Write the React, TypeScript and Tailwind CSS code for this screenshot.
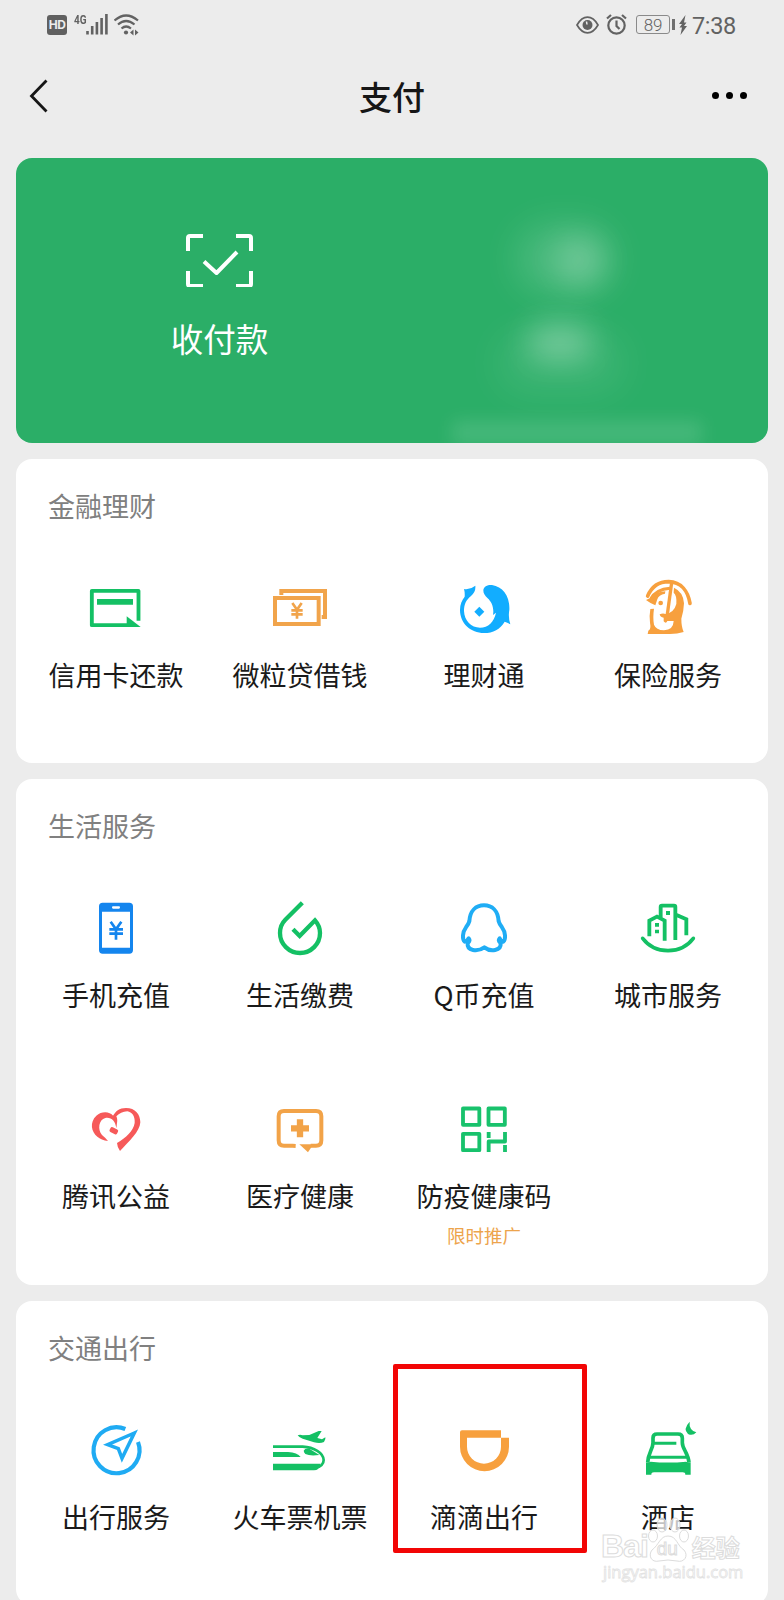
import type { ReactNode } from "react";

type Service = {
  name: string;
  icon: ReactNode;
  color: string;
  note?: string;
  highlighted?: boolean;
};

const GREEN = "text-[#14c064]";
const ORANGE = "text-[#f7a03e]";
const BLUE = "text-[#12adff]";

function Glyph({ children }: { children: ReactNode }) {
  return (
    <svg viewBox="0 0 180 180" className="h-[60px] w-[60px]" fill="none" stroke="currentColor">
      {children}
    </svg>
  );
}

const finance: Service[] = [
  {
    name: "信用卡还款",
    color: GREEN,
    icon: (
      <Glyph>
        <path d="M157.500 128L157.500 38.500H17.500V141.500H128" strokeWidth="11.500" strokeLinejoin="round" />
        <path d="M33 71.500H141" strokeWidth="17" />
        <path d="M122 115L164 147H122Z" fill="currentColor" stroke="none" />
      </Glyph>
    )
  },
  {
    name: "微粒贷借钱",
    color: "text-[#f1a44b]",
    icon: (
      <Glyph>
        <rect x="15" y="60" width="131" height="78" strokeWidth="12" />
        <path d="M34 51V39H165V117H155" strokeWidth="12" />
        <path d="M67 75L81 95L95 75M64 97H98M64 109H98M81 95V122" strokeWidth="8" />
      </Glyph>
    )
  },
  {
    name: "理财通",
    color: BLUE,
    icon: (
      <Glyph>
        <g fill="currentColor" stroke="none">
          <path d="M30 33Q48 36 64 23Q66 42 51 54C36 66 30 80 30 99C31 128 52 149 78 149C103 149 120 132 126 104L117 111C121 88 112 71 101 61C92 53 88 46 88 37C89 24 102 20 114 21C146 26 168 54 166 96Q162 116 169 139Q160 133 152 131C138 154 118 165 90 165C50 165 18 136 18 96C18 78 24 66 32 56Q33 44 30 33Z" />
          <path d="M76 86L91 101L76 116L61 101Z" />
        </g>
      </Glyph>
    )
  },
  {
    name: "保险服务",
    color: ORANGE,
    icon: (
      <Glyph>
        <path d="M29 54C42 24 64 11 92 11C130 12 150 40 156 76" strokeWidth="11" strokeLinecap="round" />
        <path d="M38 63Q54 34 96 31" strokeWidth="9" />
        <path d="M101 14L87 116" strokeWidth="10" />
        <g fill="currentColor" stroke="none">
          <path d="M24 66Q38 62 46 52Q58 42 82 40L81 47Q62 50 58 64L52 82Q40 78 24 66Z" />
          <circle cx="68" cy="75" r="7" />
          <path d="M108 29Q136 42 138 76Q137 102 130 122Q130 146 137 162Q118 168 96 168H29L31 158Q40 154 36 134Q33 116 37 93L48 92Q44 120 48 140Q54 156 78 157Q106 156 107 129H88Q84 139 77 130V119Q66 118 65 109Q74 105 83 108Q108 104 115 78Q117 52 107 44Z" />
        </g>
      </Glyph>
    )
  }
];

const living: Service[] = [
  {
    name: "手机充值",
    color: "text-[#1485ee]",
    icon: (
      <Glyph>
        <path
          d="M50 14H130Q141 14 141 25V156Q141 167 130 167H50Q39 167 39 156V25Q39 14 50 14ZM48 41V149H132V41ZM81 25Q78 25 78 28Q78 32 81 32H99Q102 32 102 28Q102 25 99 25Z"
          fill="currentColor"
          fillRule="evenodd"
          stroke="none"
        />
        <path d="M74 71L90 94L106 71M70 94H111M70 107H111M90 94V125" strokeWidth="8" />
      </Glyph>
    )
  },
  {
    name: "生活缴费",
    color: GREEN,
    icon: (
      <Glyph>
        <path
          d="M97 14L46 65C36 75 30 88 30 105A60 60 0 0 0 150 105C150 90 144 77 135 67L89 114L69 94"
          strokeWidth="13"
        />
      </Glyph>
    )
  },
  {
    name: "Q币充值",
    color: "text-[#1fadf5]",
    icon: (
      <Glyph>
        <path
          d="M46 70C48 38 66 22 90 22C114 22 132 38 134 70Q136 78 144 88C156 104 155 124 148 131Q142 131 137 121Q131 128 140 136C142 158 110 163 91 148C70 163 38 158 41 136Q50 128 44 121Q38 131 32 131C25 124 24 104 36 88Q44 78 46 70Z"
          strokeWidth="12"
          strokeLinejoin="round"
        />
      </Glyph>
    )
  },
  {
    name: "城市服务",
    color: GREEN,
    icon: (
      <Glyph>
        <path d="M14 121Q42 158 90 158Q138 158 166 121" strokeWidth="11" strokeLinecap="round" />
        <path d="M34 115V68L57 56L80 68V128M68 60V27Q68 23 72 23H108Q112 23 112 27V126M114 50L145 64V112" strokeWidth="11.500" />
        <path d="M90 39V51M57 75V86M57 95V106" strokeWidth="12" />
      </Glyph>
    )
  },
  {
    name: "腾讯公益",
    color: "text-[#f65959]",
    icon: (
      <Glyph>
        <g fill="currentColor" stroke="none">
          <path d="M79 55C88 36 100 27 120 27C148 27 163 46 163 70C162 98 128 128 102 156Q94 146 93 132C120 116 142 96 146 72C148 52 138 39 124 37Q104 38 91 52Q96 62 92 78Q88 64 79 55Z" />
          <path d="M82 51C70 36 46 37 31 50C10 70 16 98 34 113Q46 123 66 126Q58 116 48 108C34 92 38 62 58 57C76 54 88 66 91 88Q96 66 82 51Z" />
          <rect x="71" y="87" width="25" height="16" rx="5" transform="rotate(27 83 95)" />
        </g>
      </Glyph>
    )
  },
  {
    name: "医疗健康",
    color: "text-[#f2a348]",
    icon: (
      <Glyph>
        <path d="M77 141L68 140.500H42Q26 140.500 26 124V52Q26 36 42 36H138Q154 36 154 52V124Q154 140.500 138 140.500H122" strokeWidth="12" />
        <path d="M90 61V115M63 88H117" strokeWidth="19" />
        <path d="M88 136H130L114 160Z" fill="currentColor" stroke="none" />
      </Glyph>
    )
  },
  {
    name: "防疫健康码",
    color: "text-[#18c26c]",
    note: "限时推广",
    icon: (
      <Glyph>
        <g strokeWidth="11.500" strokeLinejoin="round">
          <rect x="27" y="28.500" width="49" height="49" />
          <rect x="103.500" y="28.500" width="49" height="49" />
          <rect x="27" y="104.500" width="49" height="49" />
          <path d="M104 99V117M153 99V127.500H104V159M153 138V159" />
        </g>
      </Glyph>
    )
  }
];

const transport: Service[] = [
  {
    name: "出行服务",
    color: "text-[#1fabf3]",
    icon: (
      <Glyph>
        <path d="M118 27A69 69 0 1 0 156 66" strokeWidth="12.500" />
        <path d="M145 39L65 74L97 86L108 115Z" strokeWidth="10.500" />
      </Glyph>
    )
  },
  {
    name: "火车票机票",
    color: GREEN,
    icon: (
      <Glyph>
        <path d="M9 80H98C132 82 160 98 161 120C161 132 152 142 138 142" strokeWidth="8" />
        <g fill="currentColor" stroke="none">
          <path d="M9 131H152Q148 150 132 151H9Z" />
          <path d="M9 96H54Q82 98 92 111H9Z" />
          <path d="M101 92Q105 84 118 86L148 105Q120 109 106 102Q102 98 101 92Z" />
          <path d="M83 46Q90 43 98 46L118 45L146 33H155L142 54L156 58L166 52Q168 58 162 66Q150 72 132 67L98 56Q88 54 83 46Z" />
        </g>
      </Glyph>
    )
  },
  {
    name: "滴滴出行",
    color: ORANGE,
    highlighted: true,
    icon: (
      <Glyph>
        <path
          d="M18 37Q18 31 24 31H141V53H165V80A73.500 73.500 0 0 1 18 80ZM39 53V80A51 51 0 0 0 141 80V53Z"
          fill="currentColor"
          fillRule="evenodd"
          stroke="none"
        />
      </Glyph>
    )
  },
  {
    name: "酒店",
    color: GREEN,
    icon: (
      <Glyph>
        <path d="M29 128C30 98 45 88 45 68V54Q45 42 57 42H120Q133 42 133 54V68C133 88 151 98 153 128" strokeWidth="11" />
        <path d="M47 69.500H115M34 112H148" strokeWidth="9" />
        <g fill="currentColor" stroke="none">
          <path d="M24 128Q32 128 38 125Q90 130 144 125Q150 128 158 128V164H142Q142 157 134 157H48Q40 157 40 164H24Z" />
          <path d="M155 5Q152 30 175 37Q164 49 150 42Q134 27 155 5Z" />
        </g>
      </Glyph>
    )
  }
];

function ServiceItem({ service }: { service: Service }) {
  return (
    <div className="relative flex h-[201px] flex-col items-center pt-[54px]">
      <span className={service.color}>{service.icon}</span>
      <span className="mt-[19px] text-[27px] leading-9 whitespace-nowrap text-[#1a1a1a]">{service.name}</span>
      {service.note && <span className="mt-[7px] text-[18.5px] leading-7 text-[#eda44c]">{service.note}</span>}
      {service.highlighted && (
        <span className="absolute -top-0.5 left-px h-[189px] w-[194px] rounded-[2px] border-5 border-[#f20505]" />
      )}
    </div>
  );
}

function Section({ title, services, className }: { title: string; services: Service[]; className: string }) {
  return (
    <section className={`mt-4 shrink-0 rounded-2xl bg-white px-2 pt-[29px] ${className}`}>
      <h2 className="pl-6 text-[27px] leading-9 text-[#808080]">{title}</h2>
      <div className="grid grid-cols-4">
        {services.map((service) => (
          <ServiceItem key={service.name} service={service} />
        ))}
      </div>
    </section>
  );
}

function StatusBar() {
  return (
    <div className="flex h-[49px] shrink-0 items-center justify-between pr-12 pl-[47px] text-[#626262]">
      <div className="flex items-center">
        <span className="flex h-5 w-5 items-center justify-center rounded-[3px] bg-[#606060] font-['Inter'] text-[12px] font-bold tracking-[-0.5px] text-[#ececec]">
          HD
        </span>
        <span className="mb-[11px] ml-[7px] w-3 origin-left scale-x-[0.74] font-['Roboto'] text-[13.5px] leading-3 font-bold">4G</span>
        <svg viewBox="0 0 22 22" className="mb-px h-[22px] w-[22px]" stroke="currentColor" strokeWidth="2.600">
          <path d="M1.500 18V21.500M6.200 13V21.500M10.900 9V21.500M15.600 5V21.500M20.400 1V21.500" />
        </svg>
        <svg viewBox="0 0 25 22" className="ml-1.5 h-[22px] w-[25px]" fill="none" stroke="currentColor" strokeWidth="2.200">
          <path d="M.5 6.500Q12 -3.500 24 6.500M4 10.500Q12 3.500 20.500 10.500M7.500 14.500Q12 10.500 17 14.500" />
          <circle cx="12" cy="18.500" r="2.100" fill="currentColor" stroke="none" />
          <path d="M16 18.500L19.500 15.500V21.500ZM21 15.500L24.500 18.500L21 21.500Z" fill="currentColor" stroke="none" />
        </svg>
      </div>
      <div className="flex items-center">
        <svg viewBox="0 0 23 18" className="h-[18px] w-[23px]" fill="none" stroke="currentColor" strokeWidth="1.700">
          <path d="M1 9Q5.500 1.200 11.500 1.200T22 9Q17.500 16.800 11.500 16.800T1 9Z" />
          <circle cx="11.500" cy="9" r="5" fill="currentColor" stroke="none" />
          <path d="M11 8.500L10.500 5.500" stroke="#ececec" strokeWidth="1.500" />
        </svg>
        <svg viewBox="0 0 21 21" className="ml-[7px] h-[21px] w-[21px]" fill="none" stroke="currentColor" strokeWidth="2.200">
          <circle cx="10.500" cy="11.500" r="8.200" />
          <path d="M1 4.500L5 1M20 4.500L16 1M10.500 6.500V12L13.500 15" />
        </svg>
        <span className="ml-[9px] flex h-[19px] w-[34.5px] items-center justify-center rounded-[3px] border border-[#8a8a8a] pt-px font-['Roboto'] text-[17px] leading-none font-light">
          89
        </span>
        <span className="ml-[2px] h-[11px] w-[2.5px] bg-[#707070]" />
        <svg viewBox="0 0 8 20" className="ml-1 h-5 w-2" fill="currentColor">
          <path d="M6.500 0L0 9H3L.5 12.500H3L1.500 20L8 11H5L7.500 7.500H5Z" />
        </svg>
        <span className="ml-[5px] pt-0.5 font-['Roboto'] text-[23.5px] leading-7 tracking-[-0.3px]">7:38</span>
      </div>
    </div>
  );
}

function Header() {
  return (
    <header className="grid h-[93px] shrink-0 grid-cols-3 items-center pr-[37px] pl-[29px]">
      <svg viewBox="0 0 20 34" className="h-[34px] w-5" fill="none" stroke="#161616" strokeWidth="2.800">
        <path d="M17.500 1.500L2.500 17L17.500 32.500" />
      </svg>
      <h1 className="pl-[8px] text-center text-[33px] leading-10 font-medium text-[#161616]">支付</h1>
      <div className="flex justify-end gap-[7px]">
        <span className="h-[7px] w-[7px] rounded-full bg-black" />
        <span className="h-[7px] w-[7px] rounded-full bg-black" />
        <span className="h-[7px] w-[7px] rounded-full bg-black" />
      </div>
    </header>
  );
}

function PayCard() {
  return (
    <section className="relative h-[285px] shrink-0 overflow-hidden rounded-2xl bg-[#2bae67]">
      {/* obscured wallet entry */}
      <div className="absolute top-[66px] left-[500px] h-[70px] w-[98px] rounded-full bg-white/15 blur-[18px]" />
      <div className="absolute top-[78px] left-[540px] h-[50px] w-[48px] rounded-full bg-white/20 blur-[15px]" />
      <div className="absolute top-[166px] left-[512px] h-[36px] w-[64px] rounded-full bg-white/30 blur-[15px]" />
      <div className="absolute top-[172px] left-[480px] h-[66px] w-[130px] rounded-full bg-white/8 blur-[18px]" />
      <div className="absolute top-[263px] left-[436px] h-[24px] w-[250px] bg-white/13 blur-[9px]" />
      <div className="relative grid grid-cols-2 px-[31px] pt-[75px] text-white">
        <div className="flex flex-col items-center">
          <svg viewBox="0 0 68 54" className="-ml-0.5 h-[54px] w-[68px]" fill="none" stroke="currentColor" strokeWidth="4">
            <path d="M3 18V5Q3 3 5 3H18M51 3H64Q66 3 66 5V18M66 38V51Q66 53 64 53H51M18 53H5Q3 53 3 51V38" />
            <path d="M19 28.500L31.500 40L52 19" strokeLinejoin="round" />
          </svg>
          <span className="mt-[29px] text-[32.5px] leading-[44px]">收付款</span>
        </div>
      </div>
    </section>
  );
}

function Watermark() {
  return (
    <div className="absolute top-[1515px] left-[601px] w-[142px] text-white/75 [-webkit-text-stroke:1px_#dcdcdc]">
      <div className="flex h-[48px] items-end">
        <span className="font-['Liberation_Sans'] text-[32px] leading-[34px] font-bold tracking-[-1px]">Bai</span>
        <div className="relative h-[46px] w-[40px]">
          <svg viewBox="0 0 40 46" className="h-full w-full overflow-visible" fill="#ffffffbb" stroke="#dcdcdc" strokeWidth="1">
            <ellipse cx="5" cy="19" rx="4.500" ry="6" />
            <ellipse cx="14" cy="8" rx="5" ry="7" />
            <ellipse cx="27" cy="8" rx="5" ry="7" />
            <ellipse cx="36" cy="19" rx="4.500" ry="6" />
            <path d="M20 19C29 19 29 29 36 33C41 39 36 46 29 44Q20 42 11 44C3 46 0 38 4 33C11 28 12 19 20 19Z" />
          </svg>
          <span className="absolute top-[20px] left-[9px] font-['Liberation_Sans'] text-[19px] leading-6">du</span>
        </div>
        <span className="ml-1 text-[24px] leading-[32px] font-bold whitespace-nowrap">经验</span>
      </div>
      <div className="-mt-px ml-0.5 font-['Open_Sans'] text-[16.5px] leading-5 whitespace-nowrap [-webkit-text-stroke:0.8px_#e2e2e2]">
        jingyan.baidu.com
      </div>
    </div>
  );
}

export default function App() {
  return (
    <main className="relative flex h-[1600px] w-[784px] flex-col overflow-hidden bg-[#ececec] font-['Noto_Sans_CJK_SC',sans-serif]">
      <StatusBar />
      <Header />
      <div className="flex shrink-0 flex-col px-4 pt-4">
        <PayCard />
        <Section title="金融理财" services={finance} className="h-[304px]" />
        <Section title="生活服务" services={living} className="h-[506px]" />
        <Section title="交通出行" services={transport} className="h-[304px]" />
      </div>
      <Watermark />
    </main>
  );
}
